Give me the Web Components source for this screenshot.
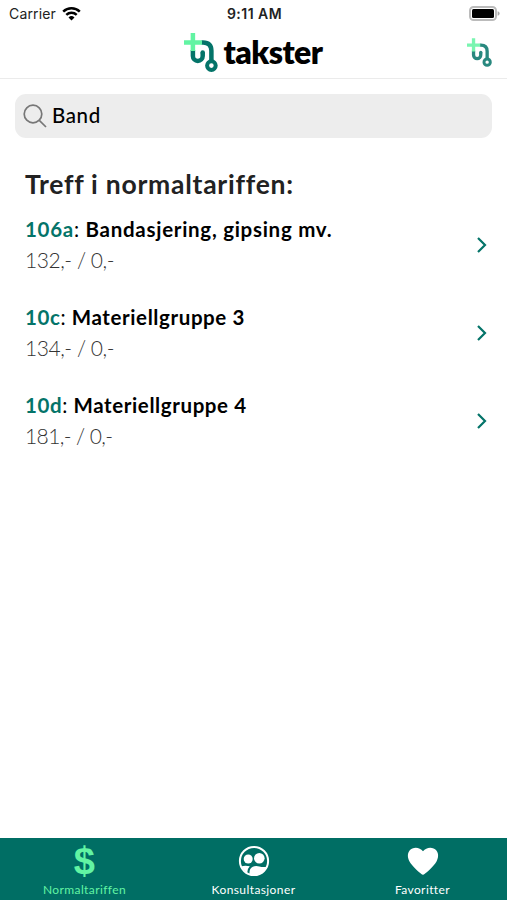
<!DOCTYPE html>
<html lang="no">
<head>
<meta charset="utf-8">
<title>takster</title>
<style>
    body {
        margin: 0;
        background: #fff;
        font-family: Lato, "Open Sans", sans-serif;
        color: #000;
    }
</style>
</head>
<body>
<takster-app>
    <status-bar slot="top" carrier="Carrier" time="9:11 AM"></status-bar>
    <app-header slot="top">takster</app-header>
    <search-field>Band</search-field>
    <result-list heading="Treff i normaltariffen:">
        <tariff-row code="106a" price="132,- / 0,-" style="--name-spacing: 0.72px">Bandasjering, gipsing mv.</tariff-row>
        <tariff-row code="10c" price="134,- / 0,-">Materiellgruppe 3</tariff-row>
        <tariff-row code="10d" price="181,- / 0,-" style="--price-spacing: -0.6px">Materiellgruppe 4</tariff-row>
    </result-list>
    <tab-bar slot="bottom">
        <tab-item icon="dollar" active>Normaltariffen</tab-item>
        <tab-item icon="people">Konsultasjoner</tab-item>
        <tab-item icon="heart">Favoritter</tab-item>
    </tab-bar>
</takster-app>

<script>
// page frame: bars on top, content in the middle, tabs at the bottom
class TaksterApp extends HTMLElement {
    constructor() {
        super();
        this.attachShadow({ mode: 'open' }).innerHTML = `
            <style>
                :host {
                    display: flex;
                    flex-direction: column;
                    height: 100vh;
                    overflow: hidden;
                }
                main {
                    flex: 1;
                    min-height: 0;
                    padding: 15px 15px 0;
                }
            </style>
            <slot name="top"></slot>
            <main><slot></slot></main>
            <slot name="bottom"></slot>
        `;
    }
}

// carrier, clock and battery
class StatusBar extends HTMLElement {
    connectedCallback() {
        this.attachShadow({ mode: 'open' }).innerHTML = `
            <style>
                :host {
                    display: grid;
                    grid-template-columns: 1fr auto 1fr;
                    align-items: center;
                    height: 27px;
                    padding: 0 7px 0 9px;
                    font: 14px/27px Inter, sans-serif;
                    color: #222;
                }
                .left { display: flex; align-items: center; gap: 6px; letter-spacing: 0.15px; }
                .time { font-weight: 600; font-size: 14px; letter-spacing: 0.45px; }
                .battery { justify-self: end; }
                svg { display: block; }
            </style>
            <div class="left">
                <span>${this.getAttribute('carrier')}</span>
                <svg width="19" height="15" viewBox="0 0 19 15" fill="none" stroke="#000" stroke-width="2.5">
                    <path d="M1.2 5.6a12 12 0 0 1 16.6 0M4.3 8.8a7.6 7.6 0 0 1 10.4 0"/>
                    <path d="M9.5 14.6L6.5 11.5a4.3 4.3 0 0 1 6 0z" fill="#000" stroke="none"/>
                </svg>
            </div>
            <span class="time">${this.getAttribute('time')}</span>
            <svg class="battery" width="31" height="15" viewBox="0 0 31 15">
                <rect x="1" y="1" width="26" height="13" rx="3.6" fill="#fff" stroke="#bbb" stroke-width="2"/>
                <rect x="3" y="3" width="22" height="9" rx="1.5" fill="#000"/>
                <path d="M28.6 5.2q2 .6 2 2.3t-2 2.3z" fill="#aaa"/>
            </svg>
        `;
    }
}

// plus sign joined to a stethoscope tube
class TaksterLogo extends HTMLElement {
    connectedCallback() {
        this.attachShadow({ mode: 'open' }).innerHTML = `
            <style>
                :host { display: block; width: 34px; height: 39px; }
                svg { display: block; width: 100%; height: 100%; }
            </style>
            <svg viewBox="0 0 34 39" fill="none" stroke-width="4.5">
                <path stroke="#047469" d="M17.5 9.400h1.500q8.400 0 8.400 8.400V28M8.900 17v6a4.900 4.900 0 0 0 9.800 0V19.500"/>
                <circle cx="18.7" cy="19.5" r="2.25" fill="#047469"/>
                <circle stroke="#047469" cx="27.4" cy="32.6" r="4.3" stroke-width="4"/>
                <path stroke="#62f4a3" d="M0 9.4h18M8.900 0v18"/>
            </svg>
        `;
    }
}

class AppHeader extends HTMLElement {
    constructor() {
        super();
        this.attachShadow({ mode: 'open' }).innerHTML = `
            <style>
                :host {
                    display: grid;
                    grid-template-columns: 1fr auto 1fr;
                    height: 51px;
                    padding: 0 15px;
                    border-bottom: 1px solid #ebebeb;
                }
                .brand {
                    grid-column: 2;
                    display: flex;
                    gap: 5px;
                    padding-top: 6px;
                    font: 800 32px/37px Lato, sans-serif;
                    letter-spacing: -0.5px;
                }
                .small {
                    justify-self: end;
                    width: 25px;
                    height: 29px;
                    margin-top: 11px;
                    opacity: 0.85;
                }
            </style>
            <div class="brand"><takster-logo></takster-logo><span><slot></slot></span></div>
            <takster-logo class="small"></takster-logo>
        `;
    }
}

class SearchField extends HTMLElement {
    constructor() {
        super();
        this.attachShadow({ mode: 'open' }).innerHTML = `
            <style>
                :host {
                    display: flex;
                    align-items: center;
                    gap: 5px;
                    height: 44px;
                    box-sizing: border-box;
                    padding: 0 0 1px 8px;
                    border-radius: 11px;
                    background: #ededed;
                    font-size: 20.5px;
                    font-weight: 500;
                    letter-spacing: 0.6px;
                }
                span { margin-top: -1px; }
            </style>
            <svg width="24" height="24" viewBox="0 0 24 24" fill="none" stroke="#777" stroke-width="1.7">
                <circle cx="10" cy="10" r="8.8"/>
                <path d="M16.3 16.3l6.7 6.7"/>
            </svg>
            <span><slot></slot></span>
        `;
    }
}

class ResultList extends HTMLElement {
    connectedCallback() {
        this.attachShadow({ mode: 'open' }).innerHTML = `
            <style>
                :host { display: block; padding: 28px 0 0 10px; }
                h2 {
                    margin: 0 0 12px;
                    font-size: 26.5px;
                    line-height: 36px;
                    font-weight: 700;
                    letter-spacing: 0.75px;
                    color: #222;
                }
            </style>
            <h2>${this.getAttribute('heading')}</h2>
            <slot></slot>
        `;
    }
}

// one hit: code, name and price
class TariffRow extends HTMLElement {
    connectedCallback() {
        this.attachShadow({ mode: 'open' }).innerHTML = `
            <style>
                :host {
                    display: flex;
                    justify-content: space-between;
                    height: 88px;
                }
                .name { font-size: 20.5px; line-height: 31px; font-weight: 700; letter-spacing: var(--name-spacing, 0.6px); }
                .code { color: #047469; }
                .colon { font-weight: 400; }
                .price { margin-top: -1px; font-size: 21px; line-height: 31px; font-weight: 300; color: #333; letter-spacing: var(--price-spacing, -0.45px); }
                svg { margin: 22px 3px 0 0; }
            </style>
            <div>
                <div class="name"><span class="code">${this.getAttribute('code')}</span><span class="colon">:</span> <slot></slot></div>
                <div class="price">${this.getAttribute('price')}</div>
            </div>
            <svg width="14" height="18" viewBox="0 0 14 18" fill="none" stroke="#047469" stroke-width="2.2">
                <path d="M3 2l7 7-7 7"/>
            </svg>
        `;
    }
}

class TabBar extends HTMLElement {
    constructor() {
        super();
        this.attachShadow({ mode: 'open' }).innerHTML = `
            <style>
                :host {
                    display: grid;
                    grid-template-columns: repeat(3, 1fr);
                    height: 62px;
                    background: #006e64;
                }
            </style>
            <slot></slot>
        `;
    }
}

const tabIcons = {
    dollar: '<span class="dollar">$</span>',
    people: `<svg width="32" height="32" viewBox="0 0 32 32">
        <circle cx="16" cy="16" r="14.1" fill="none" stroke="#fff" stroke-width="2"/>
        <circle cx="10.2" cy="14" r="4.5" fill="#fff"/>
        <circle cx="21.3" cy="13.2" r="5.3" fill="#fff"/>
        <path fill="#fff" d="M3 21.5q3.5-1.200 8.800-.3-2.600 2.400-2.700 7zM11.500 29q-.5-5.500 3.300-7.300 3-1.200 6.500-.3t8 .3q-3.300 8.500-13.300 8.800-2.200 0-4.500-1.500z"/>
    </svg>`,
    heart: `<svg width="32" height="32" viewBox="0 0 32 32">
        <path fill="#fff" d="M16 29.8C14.5 29.8 4.5 20.5 2.5 16.5C.5 12.7.2 8.5 2.6 5.5C5.8 1.5 12.5 1.600 16 6.300C19.500 1.600 26.200 1.500 29.400 5.500C31.800 8.500 31.500 12.700 29.500 16.500C27.500 20.500 17.500 29.800 16 29.800z"/>
    </svg>`
};

class TabItem extends HTMLElement {
    connectedCallback() {
        this.attachShadow({ mode: 'open' }).innerHTML = `
            <style>
                :host {
                    display: flex;
                    flex-direction: column;
                    align-items: center;
                    padding-top: 7px;
                    color: #fff;
                    font-size: 12px;
                    line-height: 18px;
                    letter-spacing: 0.4px;
                }
                :host([active]) { color: #62f4a3; }
                .icon { height: 36px; }
                .dollar { font: bold 38px/33px "Liberation Sans", sans-serif; }
            </style>
            <div class="icon">${tabIcons[this.getAttribute('icon')]}</div>
            <span><slot></slot></span>
        `;
    }
}

customElements.define('takster-app', TaksterApp);
customElements.define('status-bar', StatusBar);
customElements.define('takster-logo', TaksterLogo);
customElements.define('app-header', AppHeader);
customElements.define('search-field', SearchField);
customElements.define('result-list', ResultList);
customElements.define('tariff-row', TariffRow);
customElements.define('tab-bar', TabBar);
customElements.define('tab-item', TabItem);
</script>
</body>
</html>
